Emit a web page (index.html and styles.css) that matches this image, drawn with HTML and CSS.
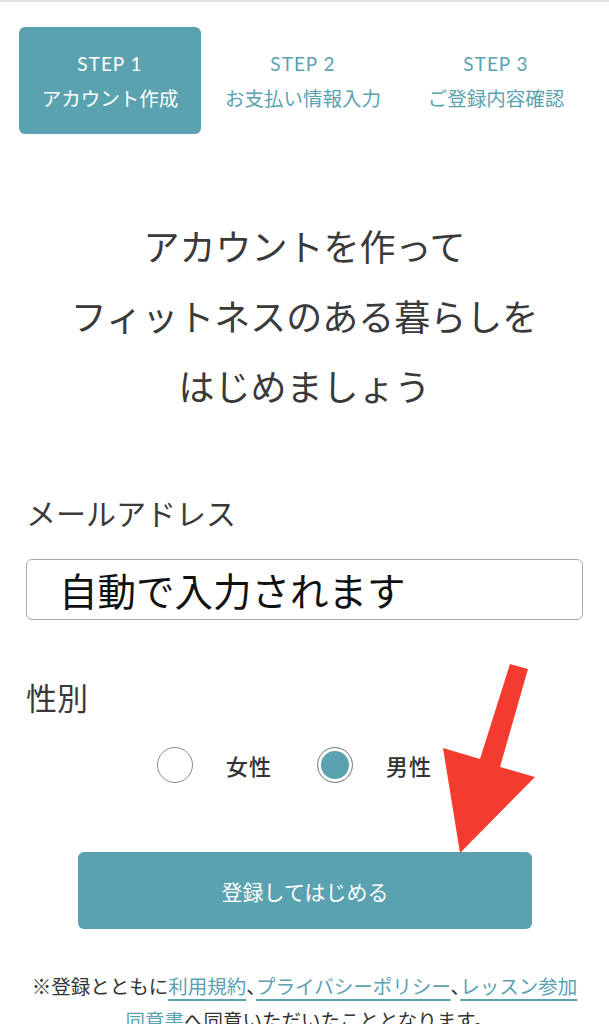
FILE: index.html
```html
<!DOCTYPE html>
<html lang="ja">
<head>
  <meta charset="UTF-8">
  <meta name="viewport" content="width=device-width, initial-scale=1.0">
  <title>アカウント作成</title>
  <link rel="stylesheet" href="styles.css">
</head>
<body>
  <div class="page">
    <ol class="steps">
      <li class="step active">
        <span class="step-num">STEP 1</span>
        <span class="step-name">アカウント作成</span>
      </li>
      <li class="step">
        <span class="step-num">STEP 2</span>
        <span class="step-name">お支払い情報入力</span>
      </li>
      <li class="step">
        <span class="step-num">STEP 3</span>
        <span class="step-name">ご登録内容確認</span>
      </li>
    </ol>

    <h1 class="lead">アカウントを作って<br>フィットネスのある暮らしを<br>はじめましょう</h1>

    <form class="signup">
      <label class="field-label" for="email">メールアドレス</label>
      <div class="input" id="email">自動で入力されます</div>

      <p class="field-label gender-label">性別</p>
      <div class="radios">
        <label class="radio"><span class="dot"></span><span class="radio-text">女性</span></label>
        <label class="radio checked"><span class="dot"></span><span class="radio-text">男性</span></label>
      </div>

      <button type="button" class="submit">登録してはじめる</button>
    </form>

    <p class="terms">※登録とともに<a href="#">利用規約</a>、<a href="#">プライバシーポリシー</a>、<a href="#">レッスン参加同意書</a>へ同意いただいたこととなります。</p>

    <!-- annotation arrow -->
    <svg class="arrow" width="609" height="1024" viewBox="0 0 609 1024">
      <polygon points="510,664 528,669 500,767 535,777 460,853 443,748 480,759" fill="#f33b2f"/>
    </svg>
  </div>
</body>
</html>
```

FILE: styles.css
```css
* {
  margin: 0;
  padding: 0;
  box-sizing: border-box;
}
body {
  font-family: "Noto Sans CJK JP", sans-serif;
  color: #333;
  background: #fff;
}
.page {
  position: relative;
  width: 609px;
  height: 1024px;
  overflow: hidden;
  border-top: 2px solid #e2e2e2;
}

/* steps */
.steps {
  list-style: none;
  display: grid;
  grid-template-columns: repeat(3, 182px);
  gap: 11px;
  padding: 25px 0 0 19px;
}
.step {
  height: 107px;
  border-radius: 6px;
  display: flex;
  flex-direction: column;
  align-items: center;
  justify-content: center;
  color: #5ba2b0;
  gap: 8px;
}
.step.active {
  background: #5ba2b0;
  color: #fff;
}
.step-num {
  font-family: Lato, "Noto Sans CJK JP", sans-serif;
  font-size: 19px;
  letter-spacing: 1px;
  line-height: 26px;
}
.step-name {
  font-size: 19.5px;
  line-height: 26px;
}

/* heading */
.lead {
  margin-top: 76px;
  text-align: center;
  font-size: 36px;
  font-weight: 400;
  line-height: 70px;
  color: #3a3a3a;
}

/* form */
.signup {
  padding: 0 26px;
}
.field-label {
  display: block;
  margin-top: 72px;
  font-size: 30px;
  line-height: 40px;
  color: #3a3a3a;
}
.input {
  margin-top: 27px;
  height: 61px;
  border: 1.5px solid #aaa;
  border-radius: 6px;
  padding-left: 32px;
  font-size: 38.5px;
  line-height: 58px;
  color: #111;
}
.gender-label {
  margin-top: 57px;
  font-size: 31px;
}
.radios {
  display: flex;
  align-items: center;
  margin-top: 30px;
  padding-left: 131px;
  height: 36px;
}
.radio {
  display: flex;
  align-items: center;
}
.radio + .radio {
  margin-left: 45px;
}
.dot {
  width: 36px;
  height: 36px;
  border-radius: 50%;
  border: 1.5px solid #888;
  background: #fff;
}
.radio.checked .dot {
  background: #5ba2b0;
  box-shadow: inset 0 0 0 3px #fff;
}
.radio-text {
  margin-left: 33px;
  font-size: 22px;
  font-weight: 500;
  letter-spacing: 1px;
}
.submit {
  display: block;
  margin: 69px 0 0 52px;
  width: 454px;
  height: 77px;
  border: none;
  border-radius: 6px;
  background: #5ba2b0;
  color: #fff;
  font-family: "Noto Sans CJK JP", sans-serif;
  font-size: 21px;
}

/* terms */
.terms {
  margin-top: 40px;
  padding: 0 26px;
  text-align: center;
  font-size: 19.5px;
  line-height: 34px;
  color: #333;
  font-feature-settings: "halt";
}
.terms a {
  color: #5ba2b0;
  text-decoration: underline;
  text-underline-offset: 5px;
  text-decoration-thickness: 1.5px;
}

.arrow {
  position: absolute;
  left: 0;
  top: -2px;
  pointer-events: none;
}
```
